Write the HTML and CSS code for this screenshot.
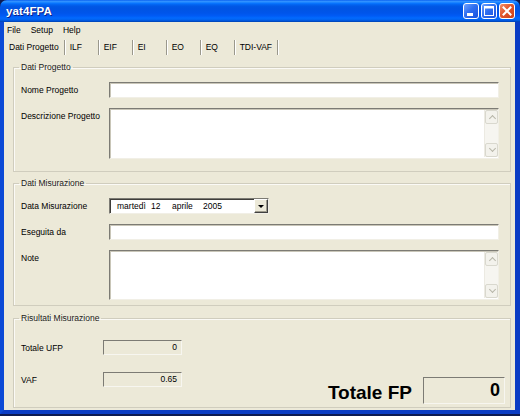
FILE: index.html
```html
<!DOCTYPE html>
<html lang="it">
<head>
<meta charset="utf-8">
<title>yat4FPA</title>
<link rel="stylesheet" href="styles.css">
</head>
<body>
<div class="window">
  <div class="titlebar">
    <span class="title">yat4FPA</span>
    <div class="controls">
      <span class="cbtn blue">
        <svg width="16" height="16" viewBox="0 0 16 16"><rect x="4" y="10" width="6" height="3" fill="#fff"/></svg>
      </span>
      <span class="cbtn blue">
        <svg width="16" height="16" viewBox="0 0 16 16"><rect x="3.5" y="3.5" width="9" height="9" fill="none" stroke="#fff" stroke-width="1"/><rect x="3" y="3" width="10" height="2.5" fill="#fff"/></svg>
      </span>
      <span class="cbtn red">
        <svg width="16" height="16" viewBox="0 0 16 16"><path d="M4.5 4.5 L11.5 11.5 M11.5 4.5 L4.5 11.5" stroke="#fff" stroke-width="2" stroke-linecap="square"/></svg>
      </span>
    </div>
  </div>
  <div class="frame">
    <div class="menubar">
      <span>File</span><span>Setup</span><span>Help</span>
    </div>
    <div class="tabs">
      <span class="tab active">Dati Progetto</span>
      <span class="tab">ILF</span>
      <span class="tab">EIF</span>
      <span class="tab">EI</span>
      <span class="tab">EO</span>
      <span class="tab">EQ</span>
      <span class="tab">TDI-VAF</span>
    </div>
    <div class="panel">
      <fieldset class="group g1">
        <legend>Dati Progetto</legend>
        <div class="form">
          <label class="lbl">Nome Progetto</label>
          <div class="field"></div>
          <label class="lbl top">Descrizione Progetto</label>
          <div class="area h51">
            <div class="sb"><span class="sbb up"></span><span class="sbt"></span><span class="sbb down"></span></div>
          </div>
        </div>
      </fieldset>
      <fieldset class="group g2">
        <legend>Dati Misurazione</legend>
        <div class="form">
          <label class="lbl">Data Misurazione</label>
          <div class="date">
            <span class="d1">martedì</span><span class="d2">12</span><span class="d3">aprile</span><span class="d4">2005</span>
            <span class="ddbtn"><span class="tri"></span></span>
          </div>
          <label class="lbl">Eseguita da</label>
          <div class="field"></div>
          <label class="lbl top">Note</label>
          <div class="area h50">
            <div class="sb"><span class="sbb up"></span><span class="sbt"></span><span class="sbb down"></span></div>
          </div>
        </div>
      </fieldset>
      <fieldset class="group g3">
        <legend>Risultati Misurazione</legend>
        <div class="results">
          <div class="rgrid">
            <span class="lbl">Totale UFP</span><span class="ro">0</span>
            <span class="lbl">VAF</span><span class="ro">0.65</span>
          </div>
          <div class="total">
            <span class="tlabel">Totale FP</span>
            <span class="tbox">0</span>
          </div>
        </div>
      </fieldset>
    </div>
  </div>
  <div class="taskbar"></div>
</div>
</body>
</html>
```
FILE: styles.css
```css
* { box-sizing: border-box; }
html, body { margin: 0; padding: 0; }
body {
  width: 520px;
  height: 416px;
  overflow: hidden;
  background: #0c1a52;
  font-family: "Liberation Sans", Arial, sans-serif;
  font-size: 8.5px;
  color: #000;
}
.window {
  height: 416px;
  display: flex;
  flex-direction: column;
}
.titlebar {
  height: 22px;
  flex: none;
  display: flex;
  align-items: center;
  justify-content: space-between;
  padding: 0 5px 0 6px;
  border-radius: 7px 7px 0 0;
  background: linear-gradient(to bottom, #0058ee 0%, #3593ff 5%, #288eff 9%, #127dff 13%, #036ffc 17%, #0262ee 22%, #0057e5 30%, #0054e3 40%, #0055eb 60%, #005bf5 72%, #026afe 82%, #0062ef 90%, #0052d6 95%, #0040ab 100%);
}
.title {
  color: #fff;
  font-weight: bold;
  font-size: 11.5px;
  text-shadow: 1px 1px 0 #0a1f8a;
  letter-spacing: 0.1px;
}
.controls {
  display: flex;
  gap: 2px;
  padding-bottom: 1px;
}
.cbtn {
  width: 16px;
  height: 16px;
  border: 1px solid #fff;
  border-radius: 3px;
  display: flex;
}
.cbtn.blue { background: linear-gradient(135deg, #6fa2ff 0%, #2f6ff0 45%, #1752e0 100%); }
.cbtn.red { background: linear-gradient(135deg, #f08f6a 0%, #e2572d 45%, #c9401b 100%); }
.cbtn svg { margin: -1px; }
.frame {
  flex: 1;
  display: flex;
  flex-direction: column;
  background: #ece9d8;
  border-left: 4px solid #0b4ad6;
  border-right: 5px solid #0a3cc4;
  border-bottom: 4px solid #0a3cc4;
  box-shadow: inset 0 0 0 0 transparent;
}
.taskbar {
  height: 2px;
  flex: none;
  background: #0c1a52;
}
.menubar {
  height: 16px;
  flex: none;
  display: flex;
  align-items: center;
  gap: 10px;
  padding-left: 3px;
}
.tabs {
  height: 18px;
  flex: none;
  display: flex;
  align-items: center;
}
.tab {
  height: 15px;
  min-width: 34px;
  padding: 0 5px;
  display: flex;
  align-items: center;
  border-right: 1px solid #9a988c;
  box-shadow: 1px 0 0 #ffffff;
}
.tab.active {
  color: #000;
}
.panel {
  flex: 1;
  padding: 5px 4px 0 9px;
}
.group {
  margin: 0;
  border: 1px solid #d0cdbe;
  box-shadow: inset 1px 1px 0 #fbfaf6;
  padding: 9px 11px 12px 7px;
  min-width: 0;
}
.group legend {
  padding: 0 2px;
  margin-left: -2px;
  line-height: 12px;
  color: #1a1a1a;
}
.g2 { margin-top: 5px; padding-bottom: 5px; }
.g3 { margin-top: 6px; padding: 16px 5px 3px 7px; }
.form {
  display: grid;
  grid-template-columns: 88px 1fr;
  row-gap: 10px;
  align-items: center;
}
.lbl { white-space: nowrap; }
.lbl.top { align-self: start; padding-top: 3px; }
.field, .area, .date {
  background: #fff;
  border-style: solid;
  border-width: 1px;
  border-color: #7c7b74 #f1efe6 #f1efe6 #7c7b74;
  box-shadow: inset 1px 1px 0 #c9c6b8;
}
.field { height: 16px; }
.area {
  display: flex;
  justify-content: flex-end;
  padding: 1px 0 1px 0;
}
.h51 { height: 51px; }
.h50 { height: 50px; }
.sb {
  width: 14px;
  display: flex;
  flex-direction: column;
  background: #f6f5f0;
  border-left: 1px solid #eceae2;
}
.sbb {
  height: 14px;
  flex: none;
  border: 1px solid #d9d8ce;
  border-radius: 2px;
  background: #f3f2ec;
  position: relative;
}
.sbb::after {
  content: "";
  position: absolute;
  left: 3px;
  width: 4px;
  height: 4px;
  border-left: 1px solid #b7b5a8;
  border-top: 1px solid #b7b5a8;
}
.sbb.up::after { top: 5px; left: 4px; transform: rotate(45deg); }
.sbb.down::after { top: 2px; left: 4px; transform: rotate(225deg); }
.sbt { flex: 1; }
.date {
  width: 160px;
  height: 16px;
  display: flex;
  align-items: center;
  padding-left: 7px;
  box-shadow: inset 1px 1px 0 #3f3e3a;
}
.d1 { width: 34px; }
.d2 { width: 21px; }
.d3 { width: 31px; }
.d4 { flex: 1; }
.ddbtn {
  width: 14px;
  height: 14px;
  margin-right: 0;
  background: #ece9d8;
  border-style: solid;
  border-width: 1px;
  border-color: #fff #404040 #404040 #fff;
  box-shadow: inset -1px -1px 0 #9d9a8c;
  display: flex;
  align-items: center;
  justify-content: center;
}
.tri {
  width: 0;
  height: 0;
  border-left: 3px solid transparent;
  border-right: 3px solid transparent;
  border-top: 3px solid #000;
}
.results {
  height: 64px;
  display: flex;
  justify-content: space-between;
  align-items: flex-start;
}
.rgrid {
  display: grid;
  grid-template-columns: 82px 79px;
  grid-template-rows: 15px 15px;
  row-gap: 17px;
  align-items: center;
}
.ro {
  height: 15px;
  border-style: solid;
  border-width: 1px;
  border-color: #7c7b74 #f7f6f0 #f7f6f0 #7c7b74;
  background: #ece9d8;
  text-align: right;
  padding-right: 4px;
  line-height: 12px;
}
.total {
  align-self: flex-end;
  display: flex;
  align-items: center;
  gap: 11px;
}
.tlabel {
  font-size: 19px;
  font-weight: bold;
  line-height: 22px;
  padding-top: 4px;
}
.tbox {
  width: 82px;
  height: 27px;
  border-style: solid;
  border-width: 1px;
  border-color: #7c7b74 #f7f6f0 #f7f6f0 #7c7b74;
  background: #ece9d8;
  text-align: right;
  padding-right: 4px;
  font-size: 18px;
  font-weight: bold;
  line-height: 25px;
}
```
